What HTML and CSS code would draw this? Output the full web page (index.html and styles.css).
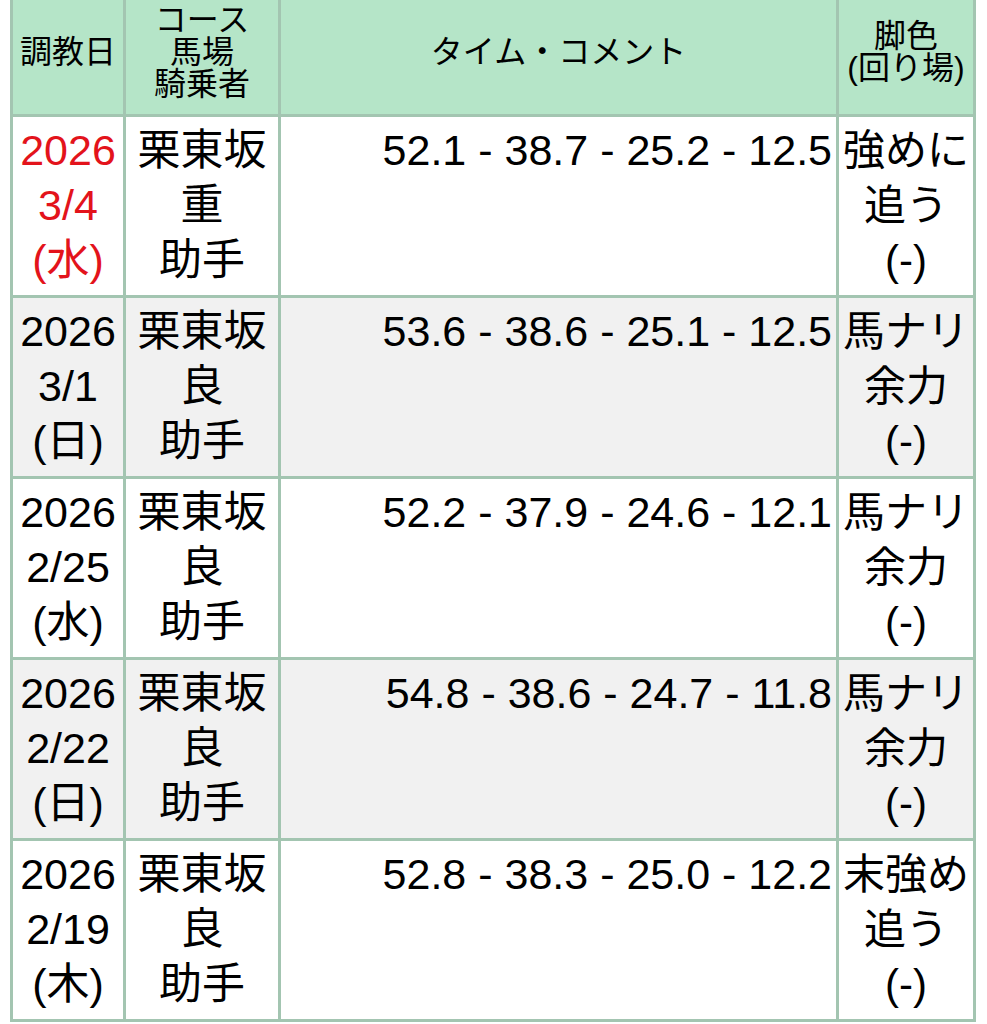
FILE: index.html
```html
<!DOCTYPE html>
<html lang="ja">
<head>
<meta charset="utf-8">
<title>調教</title>
<link rel="stylesheet" href="styles.css">
</head>
<body>
<table class="training">
  <colgroup>
    <col class="c-date">
    <col class="c-course">
    <col class="c-time">
    <col class="c-leg">
  </colgroup>
  <thead>
    <tr>
      <th>調教日</th>
      <th>コース<br>馬場<br>騎乗者</th>
      <th>タイム・コメント</th>
      <th>脚色<br>(回り場)</th>
    </tr>
  </thead>
  <tbody>
    <tr class="odd">
      <td class="date recent">2026<br>3/4<br>(水)</td>
      <td class="center">栗東坂<br>重<br>助手</td>
      <td class="time">52.1 - 38.7 - 25.2 - 12.5</td>
      <td class="center leg">強めに<br>追う<br>(-)</td>
    </tr>
    <tr class="even">
      <td class="date">2026<br>3/1<br>(日)</td>
      <td class="center">栗東坂<br>良<br>助手</td>
      <td class="time">53.6 - 38.6 - 25.1 - 12.5</td>
      <td class="center leg">馬ナリ<br>余力<br>(-)</td>
    </tr>
    <tr class="odd">
      <td class="date">2026<br>2/25<br>(水)</td>
      <td class="center">栗東坂<br>良<br>助手</td>
      <td class="time">52.2 - 37.9 - 24.6 - 12.1</td>
      <td class="center leg">馬ナリ<br>余力<br>(-)</td>
    </tr>
    <tr class="even">
      <td class="date">2026<br>2/22<br>(日)</td>
      <td class="center">栗東坂<br>良<br>助手</td>
      <td class="time">54.8 - 38.6 - 24.7 - 11.8</td>
      <td class="center leg">馬ナリ<br>余力<br>(-)</td>
    </tr>
    <tr class="odd">
      <td class="date">2026<br>2/19<br>(木)</td>
      <td class="center">栗東坂<br>良<br>助手</td>
      <td class="time">52.8 - 38.3 - 25.0 - 12.2</td>
      <td class="center leg">末強め<br>追う<br>(-)</td>
    </tr>
  </tbody>
</table>
</body>
</html>
```

FILE: styles.css
```css
html, body {
  margin: 0;
  padding: 0;
  background: #ffffff;
}

body {
  font-family: "Liberation Sans", "Noto Sans CJK JP", sans-serif;
  color: #000000;
}

.training {
  border-collapse: collapse;
  margin: -13px 0 0 10px;
  width: 966px;
  table-layout: fixed;
  border: 3px solid #a3c5b1;
}

.c-date { width: 113px; }
.c-course { width: 155px; }
.c-time { width: 558px; }
.c-leg { width: 137px; }

.training th,
.training td {
  border: 3px solid #a3c5b1;
}

.training th {
  background: #b5e5c8;
  font-weight: normal;
  font-size: 32px;
  line-height: 32px;
  padding: 14px 0;
  text-align: center;
  vertical-align: middle;
  white-space: nowrap;
}

.training td {
  font-size: 43px;
  line-height: 55px;
  padding: 6px 4px 7px;
  vertical-align: top;
}

.training td.leg {
  padding-left: 0;
  padding-right: 0;
  white-space: nowrap;
  font-size: 42px;
}

.training tr.even td {
  background: #f1f1f1;
}

.training tr.odd td {
  background: #ffffff;
}

.date,
.center {
  text-align: center;
}

.recent {
  color: #e3131b;
}

.time {
  text-align: right;
  white-space: nowrap;
}
```
